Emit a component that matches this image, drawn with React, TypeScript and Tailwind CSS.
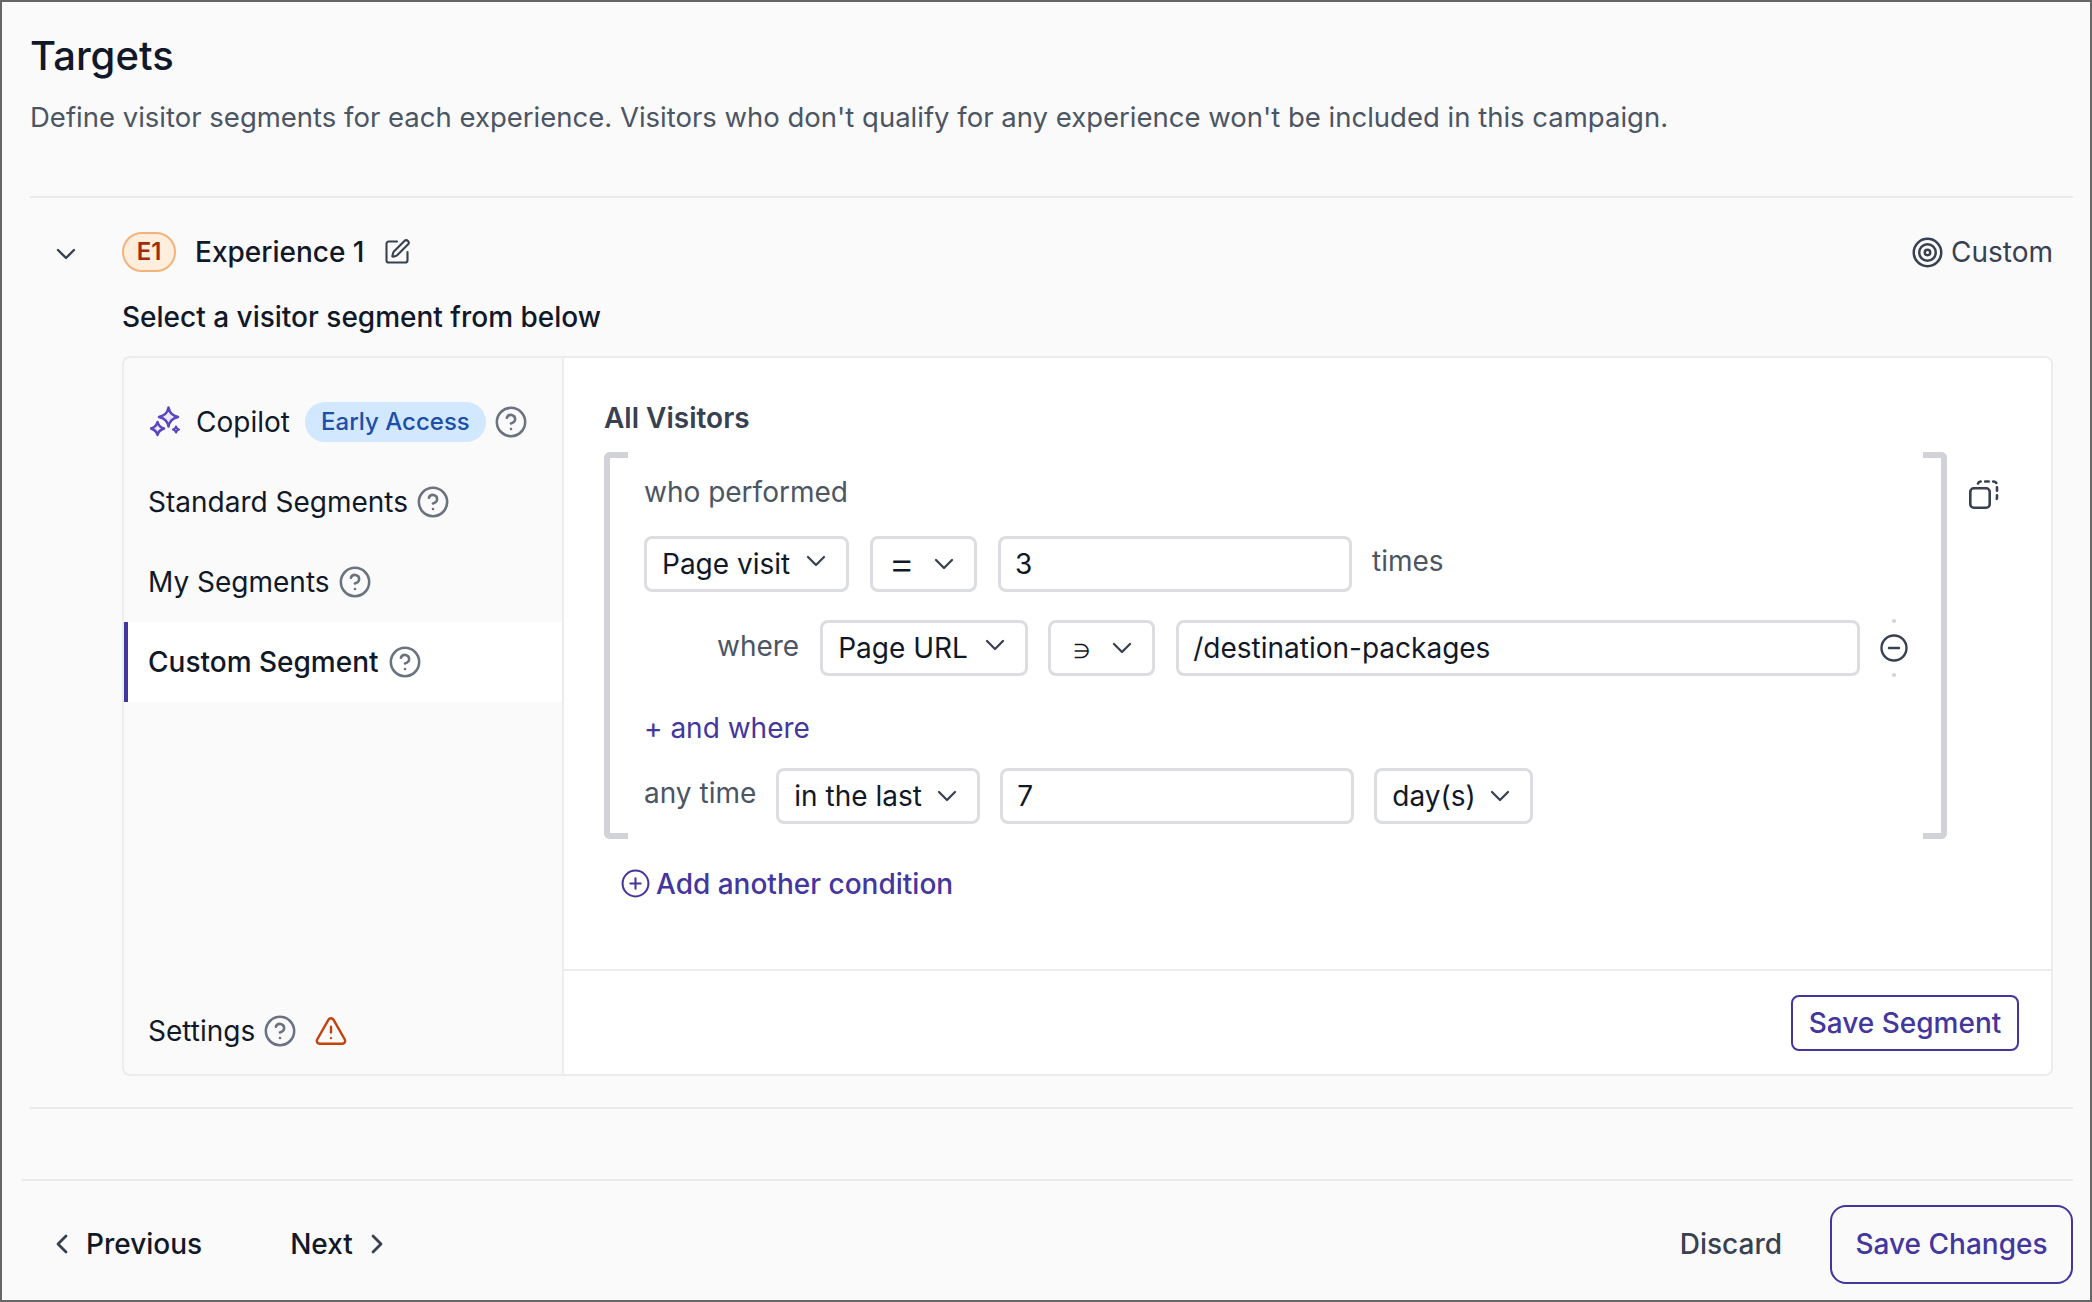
import { ReactNode } from "react"
import {
  ChevronDown,
  ChevronLeft,
  ChevronRight,
  CircleHelp,
  CircleMinus,
  CirclePlus,
  SquarePen,
  Target,
  TriangleAlert,
} from "lucide-react"

function Help({ className = "" }: { className?: string }) {
  return <CircleHelp size={34} strokeWidth={1.800} className={`shrink-0 text-[#6b7280] ${className}`} />
}

function CopilotIcon() {
  return (
    <svg width="32" height="32" viewBox="0 0 32 32" fill="none" className="shrink-0 ml-[2px]">
      <path d="M18.500 1.500c1.200 5.500 3.500 7.800 9.500 9.500-6 1.700-8.300 4-9.500 9.500-1.200-5.500-3.500-7.800-9.500-9.500 6-1.700 8.300-4 9.500-9.500z" fill="#ece9fb" stroke="#5b45c0" strokeWidth="2.500" strokeLinejoin="round" />
      <path d="M7.500 16c.8 3.500 2.500 5.200 6.500 6.500-4 1.300-5.700 3-6.500 6.500-.8-3.500-2.500-5.200-6.500-6.500 4-1.300 5.700-3 6.500-6.500z" fill="#ece9fb" stroke="#5b45c0" strokeWidth="2.500" strokeLinejoin="round" />
      <path d="M26 20.500c.4 1.700 1.100 2.500 3 3-1.900.5-2.600 1.300-3 3-.4-1.700-1.100-2.500-3-3 1.900-.5 2.600-1.300 3-3z" fill="#ece9fb" stroke="#5b45c0" strokeWidth="2.200" strokeLinejoin="round" />
    </svg>
  )
}

function CopyIcon() {
  return (
    <svg width="32" height="32" viewBox="0 0 32 32" fill="none" className="shrink-0" stroke="#374151" strokeWidth="2.600">
      <rect x="2.300" y="9.300" width="19.400" height="19.400" rx="3.500" />
      <path d="M10 4.500c.5-1.300 1.500-2 3-2h12.500c2 0 3.500 1.500 3.500 3.500v12.500c0 1.500-.7 2.500-2.500 3" strokeDasharray="3.500 4.500" strokeLinecap="round" />
    </svg>
  )
}

function Select({ width, children, chevronClass = "" }: { width: string; children: ReactNode; chevronClass?: string }) {
  return (
    <div className={`${width} h-[56px] shrink-0 flex items-center justify-between pl-[15px] pr-[14px] bg-white border-[3px] border-[#dcdde0] rounded-[8px] text-[#111827]`}>
      <span className="whitespace-nowrap">{children}</span>
      <ChevronDown size={32} strokeWidth={1.700} className={`shrink-0 text-[#374151] ${chevronClass}`} />
    </div>
  )
}

function Input({ width, value }: { width: string; value: string }) {
  return (
    <div className={`${width} h-[56px] shrink-0 flex items-center px-[14px] bg-white border-[3px] border-[#dcdde0] rounded-[8px] text-[#111827]`}>
      {value}
    </div>
  )
}

function Bracket({ side }: { side: "left" | "right" }) {
  return (
    <div
      className={
        side === "left"
          ? "w-[24px] shrink-0 border-y-[6px] border-l-[6px] border-[#d1d3d8] rounded-l-[6px]"
          : "w-[24px] shrink-0 border-y-[6px] border-r-[6px] border-[#d1d3d8] rounded-r-[6px]"
      }
    />
  )
}

function NavRow({ children, active }: { children: ReactNode; active?: boolean }) {
  return (
    <div
      className={
        active
          ? "h-[80px] flex items-center pl-[20px] bg-white border-l-[4px] border-[#44369f] font-medium"
          : "h-[80px] flex items-center pl-[24px]"
      }
    >
      {children}
    </div>
  )
}

export default function App() {
  return (
    <div className="w-[2092px] h-[1302px] flex flex-col bg-[#fafafa] border-2 border-[#666666] font-['Inter',sans-serif] text-[28px] leading-none text-[#111827] overflow-hidden">
      {/* page header */}
      <div className="ml-[28px] mr-[17px] h-[196px] border-b-[2px] border-[#ebebeb] pt-[33px]">
        <h1 className="text-[40px] leading-[42px] font-medium text-[#111827]">Targets</h1>
        <p className="mt-[24px] text-[#4b5563] text-[27.5px] leading-[32px]">
          Define visitor segments for each experience. Visitors who don't qualify for any experience won't be included in this campaign.
        </p>
      </div>

      {/* experience */}
      <div className="ml-[28px] mr-[17px] h-[911px] border-b-[2px] border-[#ebebeb]">
        <div className="flex items-center h-[40px] mt-[34px]">
          <ChevronDown size={32} strokeWidth={1.800} className="ml-[20px] mt-[3px] text-[#374151]" />
          <div className="ml-[40px] w-[54px] h-[40px] flex items-center justify-center rounded-full bg-[#ffeedb] border-[2px] border-[#f5b27a] text-[24px] font-semibold text-[#a32a0e]">
            E1
          </div>
          <span className="ml-[19px] font-medium">Experience 1</span>
          <SquarePen size={28} strokeWidth={1.800} className="ml-[19px] text-[#374151]" />
          <div className="ml-auto flex items-center gap-[7px] text-[#374151] pr-[20px]">
            <Target size={33} strokeWidth={1.800} />
            <span>Custom</span>
          </div>
        </div>
        <h2 className="ml-[92px] mt-[28px] h-[34px] leading-[34px] font-medium text-[#111827]">Select a visitor segment from below</h2>

        <div className="ml-[92px] mr-[20px] mt-[22px] h-[720px] flex border-[2px] border-[#ececec] rounded-[8px] overflow-hidden">
          {/* segment tabs */}
          <div className="w-[440px] shrink-0 flex flex-col border-r-[2px] border-[#ececec] pt-[24px] pb-[18px]">
            <NavRow>
              <CopilotIcon />
              <span className="ml-[14px]">Copilot</span>
              <span className="ml-[15px] h-[40px] w-[181px] flex items-center justify-center rounded-full bg-[#d1e8ff] text-[#1e4fa8] text-[24px] font-medium">Early Access</span>
              <Help className="ml-[8px]" />
            </NavRow>
            <NavRow>
              Standard Segments
              <Help className="ml-[8px]" />
            </NavRow>
            <NavRow>
              My Segments
              <Help className="ml-[8px]" />
            </NavRow>
            <NavRow active>
              Custom Segment
              <Help className="ml-[9px]" />
            </NavRow>
            <div className="mt-auto flex items-center h-[50px] pl-[24px]">
              Settings
              <Help className="ml-[8px]" />
              <TriangleAlert size={34} strokeWidth={1.700} className="ml-[17px] text-[#c2410c]" />
            </div>
          </div>

          {/* builder */}
          <div className="flex-1 min-w-0 flex flex-col bg-white">
            <div className="h-[613px] border-b-[2px] border-[#ececec] pl-[40px] pt-[42px]">
              <div className="text-[#374151] font-semibold h-[36px] leading-[36px]">All Visitors</div>
              <div className="flex mt-[16px] h-[387px]">
                <Bracket side="left" />
                <div className="w-[1295px] shrink-0 flex flex-col pl-[16px] pt-[20px]">
                  <div className="text-[#4b5563] h-[40px] leading-[40px]">who performed</div>
                  <div className="flex items-center gap-[21px] mt-[24px]">
                    <Select width="w-[205px]" chevronClass="-mt-[6px]">Page visit</Select>
                    <Select width="w-[107px]"><span className="-mt-[2px] inline-block text-[42px] font-light">=</span></Select>
                    <Input width="w-[354px]" value="3" />
                    <span className="-ml-[1px] text-[#4b5563] -mt-[6px]">times</span>
                  </div>
                  <div className="flex items-center gap-[21px] mt-[28px]">
                    <span className="ml-[73px] text-[#4b5563] -mt-[5px]">where</span>
                    <Select width="w-[208px]" chevronClass="-mt-[6px]">Page URL</Select>
                    <div className="-ml-[1px]">
                      <Select width="w-[107px]"><span className="ml-[7px] text-[20px] font-medium">∋</span></Select>
                    </div>
                    <Input width="w-[684px]" value="/destination-packages" />
                    <div className="-ml-[2px] relative flex items-center justify-center">
                      <CircleMinus size={30} strokeWidth={1.900} className="text-[#374151]" />
                      <span className="absolute -top-[14px] w-[4px] h-[4px] rounded-full bg-[#d1d3d8]" />
                      <span className="absolute -bottom-[14px] w-[4px] h-[4px] rounded-full bg-[#d1d3d8]" />
                    </div>
                  </div>
                  <div className="mt-[35px] text-[#44369f] h-[34px] leading-[34px]">+ and where</div>
                  <div className="flex items-center gap-[20px] mt-[23px]">
                    <span className="text-[#4b5563] -mt-[6px]">any time</span>
                    <Select width="w-[204px]">in the last</Select>
                    <Input width="w-[354px]" value="7" />
                    <Select width="w-[159px]">day(s)</Select>
                  </div>
                </div>
                <Bracket side="right" />
                <div className="ml-[21px] mt-[27px]">
                  <CopyIcon />
                </div>
              </div>
              <div className="flex items-center mt-[29px] ml-[16px] text-[#44369f] font-medium">
                <CirclePlus size={31} strokeWidth={1.600} />
                <span className="ml-[5px]">Add another condition</span>
              </div>
            </div>
            <div className="flex-1 flex items-center justify-end pr-[32px]">
              <button className="w-[228px] h-[56px] flex items-center justify-center bg-white border-[2px] border-[#44369f] rounded-[8px] text-[#44369f] font-medium">
                Save Segment
              </button>
            </div>
          </div>
        </div>
      </div>

      <div className="h-[70px] shrink-0" />

      {/* footer */}
      <div className="ml-[20px] mr-[17px] flex-1 border-t-[2px] border-[#ebebeb] flex items-center pt-[7px]">
        <div className="flex items-center font-medium text-[#111827]">
          <ChevronLeft size={32} strokeWidth={2.100} className="ml-[24px] text-[#374151]" />
          <span className="ml-[8px]">Previous</span>
          <span className="ml-[88px]">Next</span>
          <ChevronRight size={32} strokeWidth={2.100} className="ml-[8px] text-[#374151]" />
        </div>
        <span className="ml-auto font-medium text-[#374151]">Discard</span>
        <button className="ml-[48px] w-[243px] h-[79px] flex items-center justify-center border-[2px] border-[#44369f] rounded-[16px] text-[#44369f] font-medium">
          Save Changes
        </button>
      </div>
    </div>
  )
}
